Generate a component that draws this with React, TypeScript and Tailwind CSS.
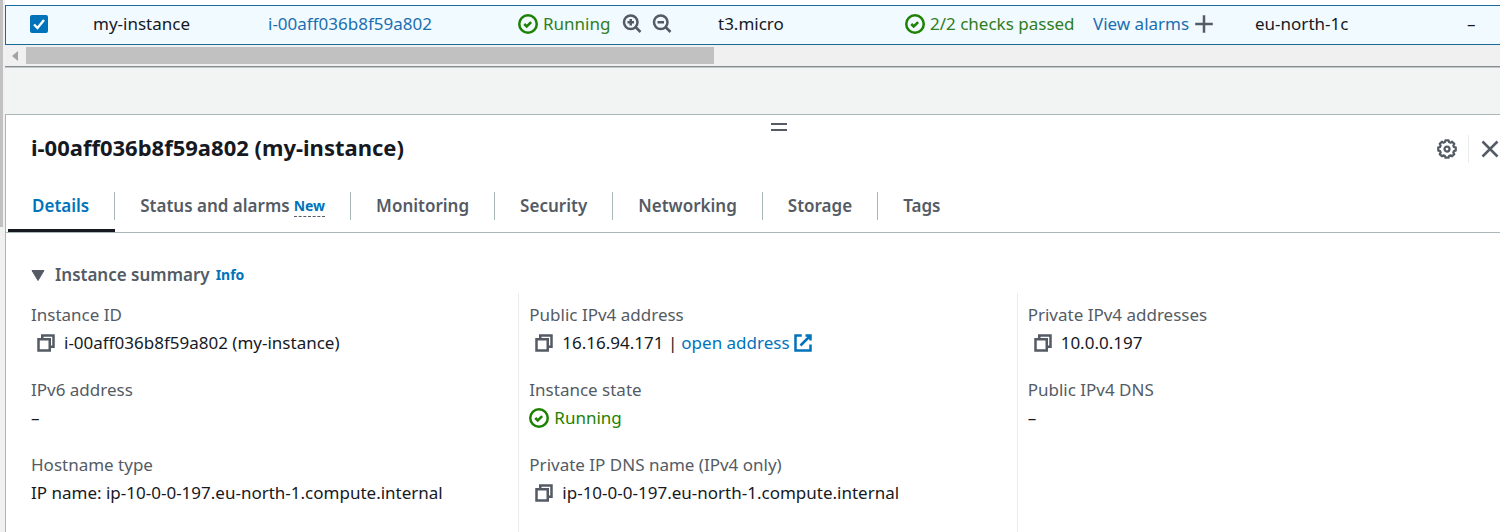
import type { ReactNode } from "react";

function Icon({ children, className = "text-[#545b64]" }: { children: ReactNode; className?: string }) {
  return (
    <svg
      viewBox="0 0 16 16"
      fill="none"
      stroke="currentColor"
      strokeWidth="2"
      aria-hidden="true"
      className={`size-5 shrink-0 ${className}`}
    >
      {children}
    </svg>
  );
}

const CheckCircle = () => (
  <Icon className="text-[#1d8102]">
    <circle cx="8" cy="8" r="7" />
    <path d="m5 8 2 2 3.5-3.5" />
  </Icon>
);

const ZoomInIcon = () => (
  <Icon>
    <circle cx="7" cy="6.6" r="5.4" />
    <path d="m10.8 10.4 4 4M7 4v5.2M4.4 6.6h5.2" />
  </Icon>
);

const ZoomOutIcon = () => (
  <Icon>
    <circle cx="7" cy="6.6" r="5.4" />
    <path d="m10.8 10.4 4 4M4.4 6.6h5.2" />
  </Icon>
);

const PlusIcon = () => (
  <Icon>
    <path d="M8 1v14M1 8h14" />
  </Icon>
);

const CopyIcon = () => (
  <Icon>
    <path d="M2 5h9v9H2z" />
    <path d="M5 5V2h9v9h-3" />
  </Icon>
);

const ExternalIcon = () => (
  <Icon className="text-[#0073bb]">
    <path d="M10 2h4v4M6 10l8-8M14 9.1V14H2V2h5" />
  </Icon>
);

const CloseIcon = () => (
  <Icon>
    <path d="m2 2 12 12M14 2 2 14" />
  </Icon>
);

const gearOutline = Array.from({ length: 8 }, (_, i) => {
  const point = (r: number, deg: number) => {
    const a = ((deg + i * 45) * Math.PI) / 180;
    return `${(8 + r * Math.cos(a)).toFixed(2)} ${(8 + r * Math.sin(a)).toFixed(2)}`;
  };
  return [point(7.1, -10), point(7.1, 10), point(5.8, 16), point(5.8, 29)].join("L");
}).join("L");

const GearIcon = () => (
  <Icon>
    <path d={`M${gearOutline}Z`} strokeWidth="1.8" strokeLinejoin="round" />
    <circle cx="8" cy="8" r="2" strokeWidth="1.8" />
  </Icon>
);

function InstanceTable() {
  return (
    <div className="border border-r-0 border-[#1a6a9a] bg-[#f1faff]">
      <table className="w-full min-w-[1494px] table-fixed text-left whitespace-nowrap">
        <colgroup>
          <col className="w-[71px]" />
          <col className="w-[175px]" />
          <col className="w-[250px]" />
          <col className="w-[200px]" />
          <col className="w-[187px]" />
          <col className="w-[188px]" />
          <col className="w-[162px]" />
          <col className="w-[212px]" />
          <col />
        </colgroup>
        <tbody>
          <tr className="h-[38px] [&>td]:pb-0.5">
            <td className="pl-6">
              <label className="block">
                <input type="checkbox" defaultChecked aria-label="Select my-instance" className="peer sr-only" />
                <svg viewBox="0 0 18 18" className="size-[18px]" aria-hidden="true">
                  <rect width="18" height="18" rx="2" fill="#0073bb" />
                  <path d="m4 9.5 3.5 3.5L14 5" fill="none" stroke="#fff" strokeWidth="2.4" />
                </svg>
              </label>
            </td>
            <td className="pl-4">my-instance</td>
            <td className="pl-4">
              <a href="#instance" className="text-[#1a6fb0]">i-00aff036b8f59a802</a>
            </td>
            <td className="pl-4">
              <div className="flex items-center">
                <CheckCircle />
                <span className="ml-[5px] text-[#2f7d1c]">Running</span>
                <button type="button" aria-label="Filter in" className="ml-3"><ZoomInIcon /></button>
                <button type="button" aria-label="Filter out" className="ml-[10px]"><ZoomOutIcon /></button>
              </div>
            </td>
            <td className="pl-4">t3.micro</td>
            <td className="pr-[3px] pl-4">
              <div className="flex items-center gap-[5px] overflow-hidden text-[#2f7d1c]">
                <CheckCircle />
                <span>2/2 checks passed</span>
              </div>
            </td>
            <td className="pl-4">
              <div className="flex items-center gap-[5px]">
                <a href="#alarms" className="text-[#1a6fb0]">View alarms</a>
                <button type="button" aria-label="Add alarm"><PlusIcon /></button>
              </div>
            </td>
            <td className="pl-4">eu-north-1c</td>
            <td className="pl-4">–</td>
          </tr>
        </tbody>
      </table>
    </div>
  );
}

const tabs = ["Details", "Status and alarms", "Monitoring", "Security", "Networking", "Storage", "Tags"];

function Tabs() {
  return (
    <div role="tablist" className="flex border-b border-[#aab7b8] pl-0.5">
      {tabs.map((tab, i) => (
        <button
          key={tab}
          type="button"
          role="tab"
          aria-selected={i === 0}
          className={`flex h-[52px] items-start border-b-3 ${
            i === 0 ? "border-[#16191f] text-[#0073bb]" : "border-transparent text-[#545b64]"
          }`}
        >
          <span
            className={`mt-3 flex h-7 items-center border-[#aab7b8] pr-[25px] font-semibold ${
              i === 0 ? "pl-6" : "pl-[25px]"
            } ${i < tabs.length - 1 ? "border-r" : ""}`}
          >
            {tab}
            {i === 1 && (
              <span className="ml-1 border-b border-dashed border-[#545b64] text-sm leading-5 font-bold text-[#0073bb]">
                New
              </span>
            )}
          </span>
        </button>
      ))}
    </div>
  );
}

function Field({ label, copy, children }: { label: string; copy?: boolean; children?: ReactNode }) {
  return (
    <div>
      <dt className="leading-7 text-[#545b64]">{label}</dt>
      <dd className="flex h-7 items-center">
        {copy && (
          <button type="button" aria-label={`Copy ${label}`} className="mr-2 ml-[5px]">
            <CopyIcon />
          </button>
        )}
        {children}
      </dd>
    </div>
  );
}

function Summary() {
  return (
    <section className="pt-7">
      <div className="flex h-7 items-center gap-[6px] pl-[25px]">
        <h3>
          <button type="button" aria-expanded="true" className="flex items-center gap-[10px] font-semibold text-[#545b64]">
            <svg viewBox="0 0 14 11" className="h-[11px] w-[14px]" aria-hidden="true">
              <path d="M1 .5h12L7 10.5z" fill="#545b64" stroke="#545b64" strokeLinejoin="round" />
            </svg>
            Instance summary
          </button>
        </h3>
        <a href="#info" className="text-sm font-bold text-[#0073bb]">Info</a>
      </div>
      <div className="mt-1 -mr-4 ml-[15px] grid grid-cols-3 divide-x divide-[#eaeded]">
        <dl className="flex flex-col gap-[19px] pt-2 pl-[10px]">
          <Field label="Instance ID" copy>i-00aff036b8f59a802 (my-instance)</Field>
          <Field label="IPv6 address">–</Field>
          <Field label="Hostname type">IP name: ip-10-0-0-197.eu-north-1.compute.internal</Field>
        </dl>
        <dl className="flex flex-col gap-[19px] pt-2 pl-[10px]">
          <Field label="Public IPv4 address" copy>
            <span>16.16.94.171 |</span>
            <a href="#open" className="ml-1 flex items-center gap-[3px] text-[#0073bb]">
              open address
              <ExternalIcon />
            </a>
          </Field>
          <Field label="Instance state">
            <CheckCircle />
            <span className="ml-[5px] text-[#1d8102]">Running</span>
          </Field>
          <Field label="Private IP DNS name (IPv4 only)" copy>
            ip-10-0-0-197.eu-north-1.compute.internal
          </Field>
        </dl>
        <dl className="flex flex-col gap-[19px] pt-2 pl-[10px]">
          <Field label="Private IPv4 addresses" copy>10.0.0.197</Field>
          <Field label="Public IPv4 DNS">–</Field>
          <div className="h-14" />
          <Field label="Elastic IP addresses" />
        </dl>
      </div>
    </section>
  );
}

export default function App() {
  return (
    <div className="flex h-screen overflow-hidden bg-[#f1f1f1] font-['Noto_Sans',sans-serif] text-[17px] leading-6 text-[#16191f]">
      <div className="w-[5px] shrink-0">
        <div className="h-[227px] w-[3px] bg-[#c1c1c1]" />
      </div>
      <main className="min-w-0 flex-1">
        <div className="overflow-hidden border-b border-[#858c90] bg-[#f0f0f0]">
          <div className="h-[5px] bg-white" />
          <InstanceTable />
          <div className="flex h-[21px] items-center">
            <span className="ml-[7px] h-0 w-0 border-y-5 border-r-6 border-y-transparent border-r-[#a3a3a3]" />
            <div className="ml-2 h-[17px] w-[46%] bg-[#c1c1c1]" />
          </div>
        </div>
        <div className="h-[47px] border-t border-[#c4c8ca] bg-[#f2f3f3]" />
        <div className="min-h-[420px] border-t border-l border-[#aab7b8] bg-white">
          <div className="flex h-[18px] flex-col items-center gap-1 pt-2 pl-[51px]">
            <span className="h-[2px] w-4 shrink-0 bg-[#545b64]" />
            <span className="h-[2px] w-4 shrink-0 bg-[#545b64]" />
          </div>
          <header className="flex h-8 items-center justify-between pl-[25px]">
            <h2 className="self-start text-[22px] leading-7 font-bold">i-00aff036b8f59a802 (my-instance)</h2>
            <div className="flex items-center">
              <button type="button" aria-label="Preferences" className="mr-[11px]"><GearIcon /></button>
              <span className="mr-[11px] h-7 w-px bg-[#eaeded]" />
              <button type="button" aria-label="Close"><CloseIcon /></button>
            </div>
          </header>
          <div className="pt-[15px]">
            <Tabs />
          </div>
          <Summary />
        </div>
      </main>
    </div>
  );
}
